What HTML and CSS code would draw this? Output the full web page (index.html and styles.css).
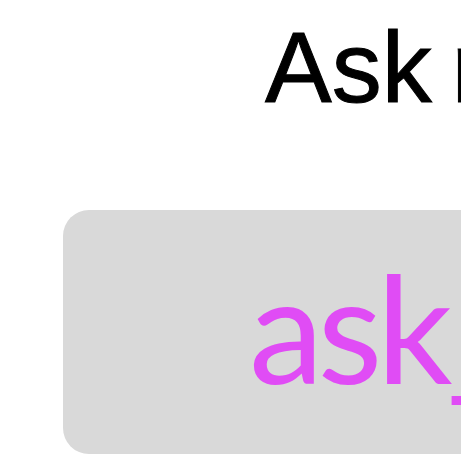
FILE: index.html
```html
<!DOCTYPE html>
<html lang="en">
<head>
<meta charset="utf-8">
<title>Ask me</title>
<link rel="stylesheet" href="styles.css">
</head>
<body>
  <main class="page">
    <h1 class="title">Ask me</h1>
    <div class="input-box">
      <span class="input-text">ask_</span>
    </div>
  </main>
</body>
</html>
```

FILE: styles.css
```css
html, body {
  margin: 0;
  padding: 0;
  background: #ffffff;
  overflow: hidden;
}

.page {
  width: 461px;
  height: 461px;
  overflow: hidden;
  display: flex;
  flex-direction: column;
}

.title {
  margin: 0;
  padding: 17px 0 0 265px;
  font-family: "Liberation Sans", Arial, sans-serif;
  font-weight: 400;
  font-size: 100px;
  line-height: 100px;
  color: #000000;
  white-space: nowrap;
  word-spacing: -8px;
  -webkit-text-stroke: 1px #000000;
}

.input-box {
  margin: 93px 0 0 63px;
  width: 480px;
  height: 244px;
  flex: none;
  box-sizing: border-box;
  background: #d9d9d9;
  border-radius: 26px;
  padding: 42px 0 0 186px;
  white-space: nowrap;
}

.input-text {
  font-family: Lato, sans-serif;
  font-size: 150px;
  line-height: 148px;
  letter-spacing: -6px;
  color: #e04cf5;
  display: block;
}
```
